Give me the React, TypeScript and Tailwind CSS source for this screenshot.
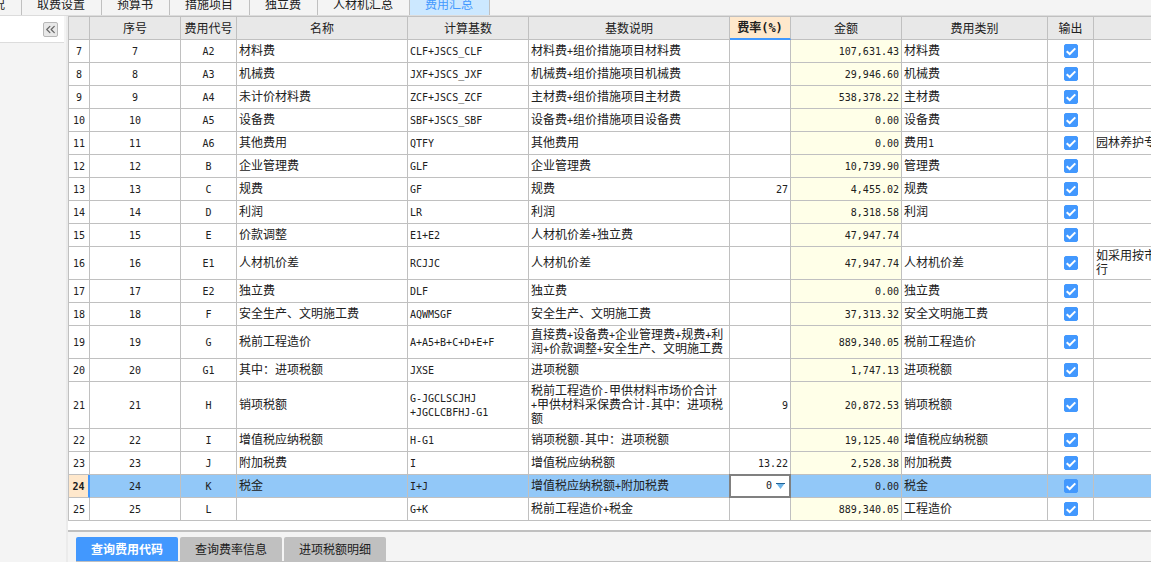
import React from 'react';
import { ChevronsLeft } from 'lucide-react';
import clsx from 'clsx';

interface FeeRow {
  no: number;
  code: string;
  name: string;
  base: string;
  description: string;
  rate?: string;
  amount: string;
  category: string;
  remark?: string;
}

const rows: FeeRow[] = [
  { no: 7, code: 'A2', name: '材料费', base: 'CLF+JSCS_CLF', description: '材料费+组价措施项目材料费', amount: '107,631.43', category: '材料费' },
  { no: 8, code: 'A3', name: '机械费', base: 'JXF+JSCS_JXF', description: '机械费+组价措施项目机械费', amount: '29,946.60', category: '机械费' },
  { no: 9, code: 'A4', name: '未计价材料费', base: 'ZCF+JSCS_ZCF', description: '主材费+组价措施项目主材费', amount: '538,378.22', category: '主材费' },
  { no: 10, code: 'A5', name: '设备费', base: 'SBF+JSCS_SBF', description: '设备费+组价措施项目设备费', amount: '0.00', category: '设备费' },
  { no: 11, code: 'A6', name: '其他费用', base: 'QTFY', description: '其他费用', amount: '0.00', category: '费用1', remark: '园林养护专' },
  { no: 12, code: 'B', name: '企业管理费', base: 'GLF', description: '企业管理费', amount: '10,739.90', category: '管理费' },
  { no: 13, code: 'C', name: '规费', base: 'GF', description: '规费', rate: '27', amount: '4,455.02', category: '规费' },
  { no: 14, code: 'D', name: '利润', base: 'LR', description: '利润', amount: '8,318.58', category: '利润' },
  { no: 15, code: 'E', name: '价款调整', base: 'E1+E2', description: '人材机价差+独立费', amount: '47,947.74', category: '' },
  { no: 16, code: 'E1', name: '人材机价差', base: 'RCJJC', description: '人材机价差', amount: '47,947.74', category: '人材机价差', remark: '如采用按市\n行' },
  { no: 17, code: 'E2', name: '独立费', base: 'DLF', description: '独立费', amount: '0.00', category: '独立费' },
  { no: 18, code: 'F', name: '安全生产、文明施工费', base: 'AQWMSGF', description: '安全生产、文明施工费', amount: '37,313.32', category: '安全文明施工费' },
  { no: 19, code: 'G', name: '税前工程造价', base: 'A+A5+B+C+D+E+F', description: '直接费+设备费+企业管理费+规费+利\n润+价款调整+安全生产、文明施工费', amount: '889,340.05', category: '税前工程造价' },
  { no: 20, code: 'G1', name: '其中：进项税额', base: 'JXSE', description: '进项税额', amount: '1,747.13', category: '进项税额' },
  { no: 21, code: 'H', name: '销项税额', base: 'G-JGCLSCJHJ\n+JGCLCBFHJ-G1', description: '税前工程造价-甲供材料市场价合计\n+甲供材料采保费合计-其中：进项税\n额', rate: '9', amount: '20,872.53', category: '销项税额' },
  { no: 22, code: 'I', name: '增值税应纳税额', base: 'H-G1', description: '销项税额-其中：进项税额', amount: '19,125.40', category: '增值税应纳税额' },
  { no: 23, code: 'J', name: '附加税费', base: 'I', description: '增值税应纳税额', rate: '13.22', amount: '2,528.38', category: '附加税费' },
  { no: 24, code: 'K', name: '税金', base: 'I+J', description: '增值税应纳税额+附加税费', rate: '0', amount: '0.00', category: '税金' },
  { no: 25, code: 'L', name: '', base: 'G+K', description: '税前工程造价+税金', amount: '889,340.05', category: '工程造价' },
];

const topTabs = ['取费设置', '预算书', '措施项目', '独立费', '人材机汇总', '费用汇总'];
const bottomTabs = ['查询费用代码', '查询费率信息', '进项税额明细'];

const headCell = 'border-r border-b border-[#c0c0c0] bg-[#e8e8e8] p-0 font-normal last:border-r-0';
const bodyCell = 'border-r border-b border-[#c0c0c0] px-0.5 pt-px pb-[3px] whitespace-pre overflow-hidden last:border-r-0';

// Latin letters and digits are set half as wide as a Chinese character
function Mixed({ text }: { text: string }) {
  return (
    <>
      {text.split(/([\x21-\x7e]+)/).map((part, i) =>
        i % 2 ? (
          <span key={i} className="font-['DejaVu_Sans_Mono',monospace] text-[10px] leading-none">
            {part}
          </span>
        ) : (
          part
        )
      )}
    </>
  );
}

function OutputCheckbox({ label }: { label: string }) {
  const [checked, setChecked] = React.useState(true);

  return (
    <span className="mx-auto grid size-3.5">
      <input
        type="checkbox"
        aria-label={label}
        checked={checked}
        onChange={(e) => setChecked(e.target.checked)}
        className="col-start-1 row-start-1 size-3.5 appearance-none rounded-xs border border-[#4298fe] bg-white checked:bg-[#4298fe]"
      />
      {checked && (
        <svg viewBox="0 0 14 14" className="pointer-events-none col-start-1 row-start-1 size-3.5" fill="none" stroke="#fff" strokeWidth="2">
          <path d="M2.7 7.2 5.7 10 11.3 4.4" />
        </svg>
      )}
    </span>
  );
}

function RateEditor({ value }: { value: string }) {
  const [rate, setRate] = React.useState(value);

  return (
    <div className="absolute -inset-px z-10 flex items-center border-2 border-[#808080] bg-white">
      <select
        aria-label="费率"
        value={rate}
        onChange={(e) => setRate(e.target.value)}
        className="h-full w-full appearance-none pr-[17px] text-right font-['DejaVu_Sans_Mono',monospace] text-[10px] [text-align-last:right] focus:outline-none"
      >
        <option value="0">0</option>
        <option value="9">9</option>
      </select>
      <svg viewBox="0 0 9 6" className="pointer-events-none absolute right-1 h-1.5 w-[9px]">
        <path d="M0 0h9L4.5 6z" fill="#6eb4e8" />
        <path d="M0 0h9v1H0z" fill="#1f6296" />
      </svg>
    </div>
  );
}

function FeeTable() {
  const [selected, setSelected] = React.useState(24);

  return (
    <table className="w-full table-fixed border-separate border-spacing-0 border-t border-l border-[#c0c0c0] text-xs leading-[14px]">
      <colgroup>
        <col className="w-[21px]" />
        <col className="w-[91px]" />
        <col className="w-[56px]" />
        <col className="w-[171px]" />
        <col className="w-[121px]" />
        <col className="w-[201px]" />
        <col className="w-[61px]" />
        <col className="w-[111px]" />
        <col className="w-[146px]" />
        <col className="w-[46px]" />
        <col />
      </colgroup>
      <thead>
        <tr className="h-[23px]">
          <th className={headCell} />
          <th className={headCell}>序号</th>
          <th className={headCell}>费用代号</th>
          <th className={headCell}>名称</th>
          <th className={headCell}>计算基数</th>
          <th className={headCell}>基数说明</th>
          <th className="border-r border-b-2 border-r-[#c0c0c0] border-b-[#4298fe] bg-[#ffe8cc] p-0 pb-px font-bold">
            费率<span className="font-['DejaVu_Sans_Mono',monospace] leading-none">(%)</span>
          </th>
          <th className={headCell}>金额</th>
          <th className={headCell}>费用类别</th>
          <th className={headCell}>输出</th>
          <th className={headCell} />
        </tr>
      </thead>
      <tbody>
        {rows.map((row) => {
          const active = row.no === selected;
          return (
            <tr key={row.no} onClick={() => setSelected(row.no)} className={clsx('h-[23px]', active && 'bg-[#92c8f8]')}>
              <th
                scope="row"
                className={clsx(
                  'border-b border-b-[#c0c0c0] p-0 pb-0.5 text-center',
                  active ? 'border-r-2 border-r-[#4298fe] bg-[#ffe8cc] font-bold' : 'border-r border-r-[#c0c0c0] font-normal'
                )}
              >
                <Mixed text={String(row.no)} />
              </th>
              <td className={clsx(bodyCell, 'text-center')}><Mixed text={String(row.no)} /></td>
              <td className={clsx(bodyCell, 'text-center')}><Mixed text={row.code} /></td>
              <td className={bodyCell}><Mixed text={row.name} /></td>
              <td className={bodyCell}><Mixed text={row.base} /></td>
              <td className={bodyCell}><Mixed text={row.description} /></td>
              {active ? (
                <td className="relative border-r border-b border-[#c0c0c0] p-0">
                  <RateEditor value={row.rate ?? '0'} />
                </td>
              ) : (
                <td className={clsx(bodyCell, 'text-right')}><Mixed text={row.rate ?? ''} /></td>
              )}
              <td className={clsx(bodyCell, 'text-right', !active && 'bg-[#ffffe8]')}>
                <Mixed text={row.amount} />
              </td>
              <td className={bodyCell}><Mixed text={row.category} /></td>
              <td className="border-r border-b border-[#c0c0c0] p-0">
                <OutputCheckbox label={`输出 ${row.no}`} />
              </td>
              <td className={bodyCell}>{row.remark}</td>
            </tr>
          );
        })}
      </tbody>
    </table>
  );
}

function App() {
  const [topTab, setTopTab] = React.useState('费用汇总');
  const [bottomTab, setBottomTab] = React.useState('查询费用代码');

  return (
    <div className="flex h-screen flex-col overflow-hidden bg-[#f4f4f4] font-['Noto_Sans_CJK_SC',sans-serif] text-xs text-[#202020]">
      <nav className="flex h-4 shrink-0 items-end overflow-hidden border-b border-[#dcdcdc]">
        <button className="flex h-[22px] w-[22px] items-center justify-end overflow-hidden border-r border-[#c0c0c0] pr-4">
          <span>况</span>
        </button>
        {topTabs.map((tab) => (
          <button
            key={tab}
            onClick={() => setTopTab(tab)}
            className={clsx(
              'h-[22px] shrink-0 border-r border-[#c0c0c0] pr-4 pl-[15px] leading-[22px]',
              tab === topTab && 'bg-[#cce8ff] text-[#4298fe]'
            )}
          >
            {tab}
          </button>
        ))}
      </nav>

      <div className="flex min-h-0 flex-1">
        <aside className="w-[68px] shrink-0 border-r-2 border-[#ebebeb] pr-0.5">
          <div className="flex h-[27px] items-center justify-end border-b border-[#dcdcdc] bg-white pr-1.5">
            <button aria-label="收起" className="flex size-[15px] items-center justify-center rounded-xs border border-[#b8b8b8] bg-[#e8e8e8] text-[#666]">
              <ChevronsLeft size={15} strokeWidth={2} className="shrink-0" />
            </button>
          </div>
        </aside>

        <main className="flex min-w-0 flex-1 flex-col">
          <div className="min-h-0 flex-1 overflow-hidden bg-white">
            <FeeTable />
          </div>
          <div className="border-t-2 border-[#c0c0c0] pt-[5px] pl-2">
            <div className="flex gap-0.5 border-b border-[#c0c0c0]">
              {bottomTabs.map((tab) => (
                <button
                  key={tab}
                  onClick={() => setBottomTab(tab)}
                  className={clsx(
                    'h-6 rounded-t-xs px-[15px]',
                    tab === bottomTab ? 'bg-[#4298fe] font-bold text-white' : 'bg-[#c0c0c0]'
                  )}
                >
                  {tab}
                </button>
              ))}
            </div>
          </div>
        </main>
      </div>
    </div>
  );
}

export default App;
